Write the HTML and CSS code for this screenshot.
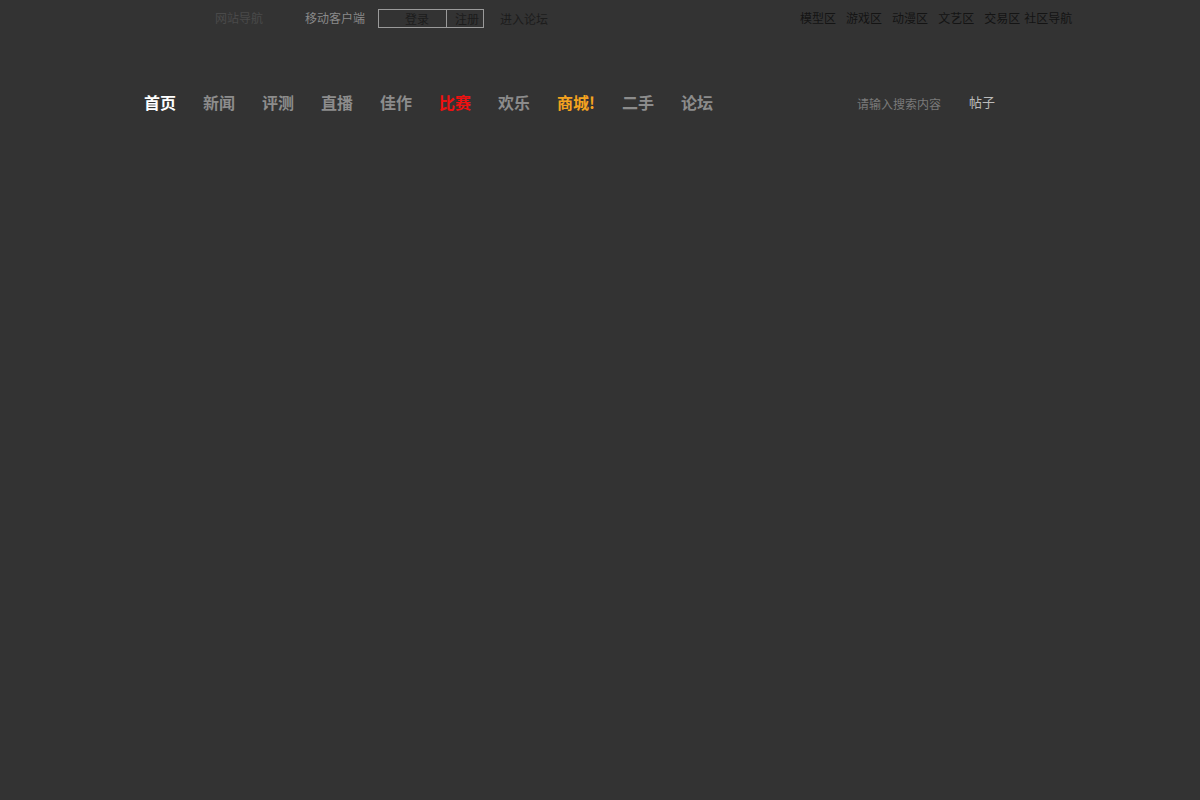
FILE: index.html
```html
<!DOCTYPE html>
<html lang="zh-CN">
<head>
<meta charset="utf-8">
<title>首页</title>
<link rel="stylesheet" href="styles.css">
</head>
<body>
<div class="topbar">
  <div class="top-left">
    <a class="site-nav">网站导航</a>
    <a class="mobile">移动客户端</a>
    <div class="auth">
      <a class="login">登录</a>
      <a class="register">注册</a>
    </div>
    <a class="forum">进入论坛</a>
  </div>
  <div class="top-right">
    <a>模型区</a>
    <a>游戏区</a>
    <a>动漫区</a>
    <a>文艺区</a>
    <a>交易区</a>
    <a class="community">社区导航</a>
  </div>
</div>
<div class="navbar">
  <nav class="main-nav">
    <a class="active">首页</a>
    <a>新闻</a>
    <a>评测</a>
    <a>直播</a>
    <a>佳作</a>
    <a class="hot">比赛</a>
    <a>欢乐</a>
    <a class="shop">商城!</a>
    <a>二手</a>
    <a>论坛</a>
  </nav>
  <div class="search">
    <input class="search-input" type="text" placeholder="请输入搜索内容">
    <span class="search-type">帖子</span>
  </div>
</div>
</body>
</html>
```
FILE: styles.css
```css
html, body {
  margin: 0;
  padding: 0;
  background: #333333;
  height: 100%;
}
body {
  font-family: "Noto Sans CJK SC", "Noto Sans", "Liberation Sans", sans-serif;
  font-size: 12px;
}
a {
  text-decoration: none;
  cursor: pointer;
}
.topbar {
  display: flex;
  align-items: center;
  height: 35px;
}
.top-left {
  display: flex;
  align-items: center;
  margin-left: 215px;
}
.site-nav {
  color: #4a4a4a;
}
.mobile {
  color: #8a8a8a;
  margin-left: 42px;
}
.auth {
  display: flex;
  margin-left: 13px;
  margin-top: 2px;
  border: 1px solid #9a9a9a;
  height: 17px;
  line-height: 17px;
}
.login {
  color: #1c1c1c;
  padding: 0 17px 0 26px;
  border-right: 1px solid #9a9a9a;
}
.register {
  color: #1c1c1c;
  padding: 0 4px 0 8px;
}
.forum {
  color: #1c1c1c;
  margin-left: 16px;
  padding-top: 1px;
}
.top-right {
  display: flex;
  align-items: center;
  gap: 10px;
  margin-left: 252px;
}
.top-right a {
  color: #141414;
}
.top-right .community {
  margin-left: -6px;
}
.navbar {
  display: flex;
  align-items: center;
  height: 32px;
  margin-top: 51px;
}
.main-nav {
  display: flex;
  align-items: center;
  gap: 27px;
  margin-left: 144px;
}
.main-nav a {
  font-size: 16px;
  font-weight: bold;
  color: #8c8c8c;
}
.main-nav a.active {
  color: #ffffff;
}
.main-nav a.hot {
  color: #ee1111;
}
.main-nav a.shop {
  color: #f5a31f;
}
.search {
  display: flex;
  align-items: center;
  margin-left: 144px;
}
.search-input {
  width: 100px;
  border: none;
  background: transparent;
  outline: none;
  font-family: inherit;
  font-size: 12px;
  color: #cccccc;
  padding: 0;
  margin-top: 3px;
}
.search-input::placeholder {
  color: #7a7a7a;
}
.search-type {
  color: #bbbbbb;
  font-size: 13px;
  margin-left: 12px;
  margin-top: -2px;
}
```
